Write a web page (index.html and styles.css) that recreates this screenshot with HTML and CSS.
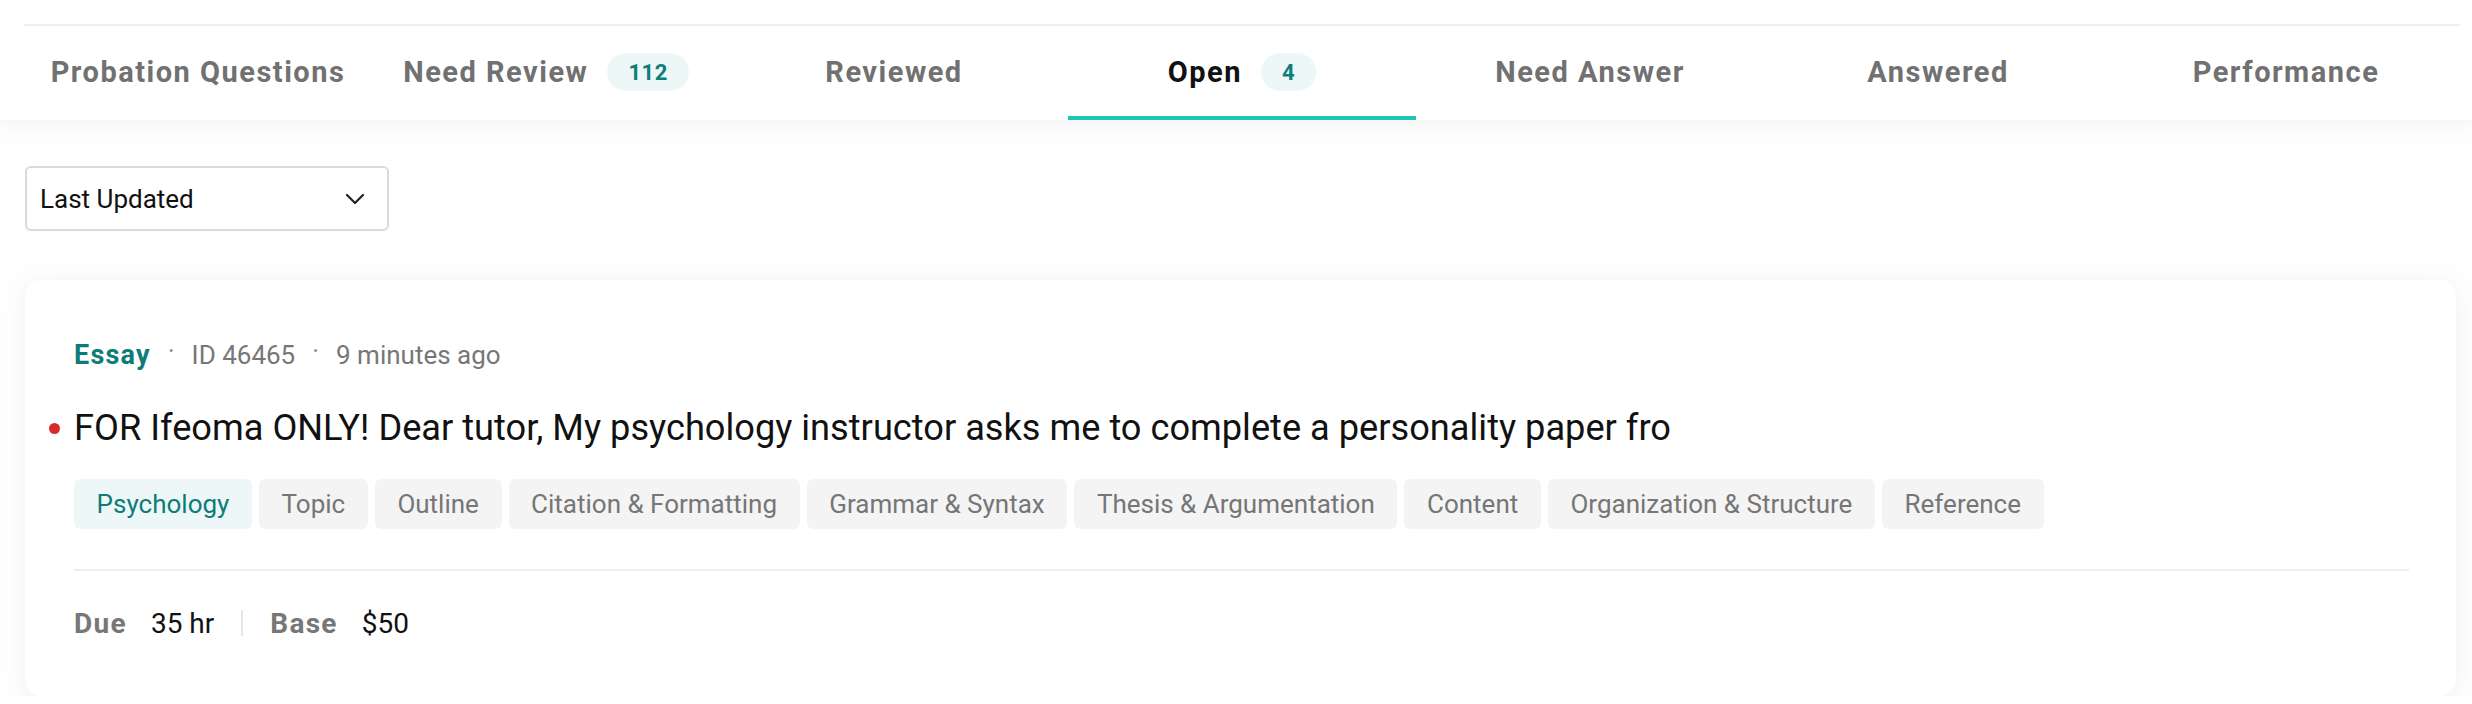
FILE: index.html
```html
<!DOCTYPE html>
<html lang="en">
<head>
<meta charset="utf-8">
<title>Questions</title>
<link rel="stylesheet" href="styles.css">
</head>
<body>
<header class="header">
  <nav class="tabs">
    <a class="tab">Probation Questions</a>
    <a class="tab">Need Review <span class="badge">112</span></a>
    <a class="tab">Reviewed</a>
    <a class="tab tab-active">Open <span class="badge">4</span></a>
    <a class="tab">Need Answer</a>
    <a class="tab">Answered</a>
    <a class="tab">Performance</a>
  </nav>
</header>

<main class="content">
  <div class="sort">
    <span class="sort-label">Last Updated</span>
    <svg class="chevron" width="20" height="12" viewBox="0 0 20 12"><polyline points="2,2 10,10 18,2" fill="none" stroke="#222" stroke-width="2.2" stroke-linecap="round" stroke-linejoin="round"/></svg>
  </div>

  <article class="card">
    <div class="meta">
      <span class="meta-type">Essay</span>
      <span class="meta-dot">·</span>
      <span class="meta-text">ID 46465</span>
      <span class="meta-dot">·</span>
      <span class="meta-text">9 minutes ago</span>
    </div>
    <h2 class="title"><span class="unread"></span>FOR Ifeoma ONLY! Dear tutor, My psychology instructor asks me to complete a personality paper fro</h2>
    <div class="chips">
      <span class="chip chip-subject">Psychology</span>
      <span class="chip">Topic</span>
      <span class="chip">Outline</span>
      <span class="chip">Citation &amp; Formatting</span>
      <span class="chip">Grammar &amp; Syntax</span>
      <span class="chip">Thesis &amp; Argumentation</span>
      <span class="chip">Content</span>
      <span class="chip">Organization &amp; Structure</span>
      <span class="chip">Reference</span>
    </div>
    <div class="divider"></div>
    <div class="footer">
      <span class="f-label">Due</span>
      <span class="f-value">35 hr</span>
      <span class="f-sep"></span>
      <span class="f-label">Base</span>
      <span class="f-value">$50</span>
    </div>
  </article>
</main>
</body>
</html>
```

FILE: styles.css
```css
* { box-sizing: border-box; }

html, body {
  margin: 0;
  padding: 0;
}

body {
  background: #fefefe;
  font-family: Roboto, "Liberation Sans", Arial, sans-serif;
  color: #111;
}

.header {
  background: #fff;
  padding-top: 24px;
  box-shadow: 0 6px 18px rgba(0, 0, 0, 0.045);
  position: relative;
}

.tabs {
  margin: 0 12px 0 24px;
  border-top: 2px solid #eeeeee;
  display: grid;
  grid-template-columns: repeat(7, 1fr);
  height: 96px;
}

.tab {
  display: flex;
  align-items: center;
  justify-content: center;
  gap: 19px;
  font-size: 29px;
  font-weight: 700;
  letter-spacing: 1.5px;
  color: #717171;
  border-bottom: 4px solid transparent;
  padding-top: 2px;
}

.tab-active {
  color: #111;
  border-bottom-color: #1fc6b1;
}

.badge {
  display: inline-flex;
  align-items: center;
  justify-content: center;
  height: 38px;
  padding: 0 21px;
  border-radius: 19px;
  background: #eef7f7;
  color: #0f7d7a;
  font-size: 22px;
  font-weight: 700;
  letter-spacing: 0.5px;
}

.content {
  padding: 46px 16px 0 25px;
}

.sort {
  width: 364px;
  height: 65px;
  border: 2px solid #dadada;
  border-radius: 6px;
  background: #fff;
  display: flex;
  align-items: center;
  justify-content: space-between;
  padding: 0 22px 0 13px;
}

.sort-label {
  font-size: 26px;
  color: #111;
}

.card {
  margin-top: 49px;
  background: #fff;
  border-radius: 16px;
  box-shadow: 0 4px 24px rgba(0, 0, 0, 0.06);
  padding: 59px 47px 55px 49px;
}

.meta {
  display: flex;
  align-items: center;
  height: 32px;
  font-size: 26px;
}

.meta-type {
  color: #0d7c79;
  font-weight: 700;
  font-size: 27px;
  letter-spacing: 1.2px;
}

.meta-dot {
  color: #888;
  margin: 0 17px;
  position: relative;
  top: -4px;
}

.meta-text {
  color: #777;
}

.title {
  margin: 35px 0 0 0;
  font-size: 36.2px;
  font-weight: 400;
  line-height: 44px;
  color: #111;
  position: relative;
}

.unread {
  position: absolute;
  left: -25px;
  top: 17px;
  width: 11px;
  height: 11px;
  border-radius: 50%;
  background: #d62c2c;
}

.chips {
  margin-top: 29px;
  display: flex;
  flex-wrap: wrap;
  gap: 7px;
}

.chip {
  height: 50px;
  display: inline-flex;
  align-items: center;
  padding: 0 22.6px;
  border-radius: 6px;
  background: #f4f4f4;
  color: #767676;
  font-size: 26px;
}

.chip-subject {
  background: #eef7f7;
  color: #0d7c79;
}

.divider {
  margin-top: 40px;
  height: 2px;
  background: #eeeeee;
}

.footer {
  margin-top: 34px;
  display: flex;
  align-items: center;
  height: 36px;
  font-size: 28px;
}

.f-label {
  color: #777;
  font-weight: 700;
  letter-spacing: 1.3px;
  margin-right: 24px;
}

.f-value {
  color: #111;
}

.f-sep {
  width: 2px;
  height: 26px;
  background: #e6e6e6;
  margin: 0 27px;
}
```
